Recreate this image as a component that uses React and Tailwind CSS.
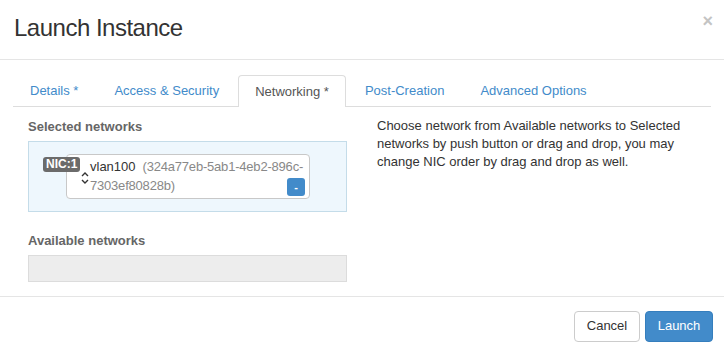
export default function App() {
  const tabs = [
    { label: "Details *" },
    { label: "Access & Security" },
    { label: "Networking *", active: true },
    { label: "Post-Creation" },
    { label: "Advanced Options" },
  ];

  return (
    <div className="relative h-[355px] w-[724px] overflow-hidden bg-white font-['Liberation_Sans',Arial,sans-serif] text-[13px] text-[#333]">
      {/* header */}
      <div className="flex h-[60px] items-center justify-between border-b border-[#e5e5e5] pl-[14px] pr-[11px]">
        <h1 className="pb-[4px] text-[24px] leading-none tracking-[-0.5px] text-[#333]">Launch Instance</h1>
        <span className="-mt-[17px] text-[18px] font-bold leading-none text-[#c4c4c4]">×</span>
      </div>

      {/* body */}
      <div className="px-[13px] pt-[15px]">
        <ul className="flex h-[32px] border-b border-[#ddd]">
          {tabs.map((t) => (
            <li key={t.label} className="mr-[2px] -mb-px">
              <div
                className={
                  t.active
                    ? "flex h-[32px] items-center rounded-t-[4px] border border-b-0 border-[#ddd] bg-white px-[16px] text-[#555]"
                    : "flex h-[32px] items-center border border-transparent px-[16px] text-[#428bca]"
                }
              >
                {t.label}
              </div>
            </li>
          ))}
        </ul>

        <div className="flex">
          {/* left column */}
          <div className="w-[350px] px-[15px]">
            <h3 className="mt-[11px] text-[13px] font-bold leading-[18px] text-[#666]">Selected networks</h3>
            <div className="mt-[5px] h-[71px] border border-[#c4dce9] bg-[#eef7fd] pl-[37px] pt-[12px]">
              <div className="relative h-[45px] w-[244px] rounded-[4px] border border-[#c8c8c8] bg-white">
                <span className="absolute -left-[24px] top-[2px] rounded-[3px] bg-[#6b6b6b] px-[3px] text-[12px] font-bold leading-[15px] text-white">
                  NIC:1
                </span>
                <svg className="absolute left-[14px] top-[17px]" width="8" height="12" viewBox="0 0 8 12" fill="none">
                  <path d="M1 4L4 1L7 4" stroke="#333" strokeWidth="1.4" />
                  <path d="M1 8L4 11L7 8" stroke="#333" strokeWidth="1.4" />
                </svg>
                <div className="whitespace-nowrap pl-[23px] pt-[2px] leading-[19px]">
                  <span className="text-[#333]">vlan100</span>
                  <span className="ml-[7px] tracking-[-0.2px] text-[#888]">(324a77eb-5ab1-4eb2-896c-</span>
                  <br />
                  <span className="tracking-[-0.2px] text-[#888]">7303ef80828b)</span>
                </div>
                <span className="absolute right-[4px] bottom-[2px] flex h-[18px] w-[18px] items-center justify-center rounded-[3px] bg-[#428bca] text-[11px] font-bold leading-none text-white">
                  -
                </span>
              </div>
            </div>

            <h3 className="mt-[20px] text-[13px] font-bold leading-[18px] text-[#666]">Available networks</h3>
            <div className="mt-[5px] h-[27px] border border-[#dcdcdc] bg-[#ededed]" />
          </div>

          {/* right column */}
          <div className="w-[350px] px-[15px] pt-[10px] leading-[18px] text-[#333]">
            <p>
              Choose network from Available networks to Selected
              <br />
              networks by push button or drag and drop, you may
              <br />
              change NIC order by drag and drop as well.
            </p>
          </div>
        </div>
      </div>

      {/* footer */}
      <div className="absolute bottom-0 left-0 right-0 flex h-[59px] items-center justify-end gap-[5px] border-t border-[#e5e5e5] pr-[11px]">
        <button className="h-[31px] w-[66px] rounded-[4px] border border-[#ccc] bg-white text-[13px] text-[#333]">Cancel</button>
        <button className="h-[31px] w-[68px] rounded-[4px] border border-[#357ebd] bg-[#428bca] text-[13px] text-white">Launch</button>
      </div>
    </div>
  );
}
